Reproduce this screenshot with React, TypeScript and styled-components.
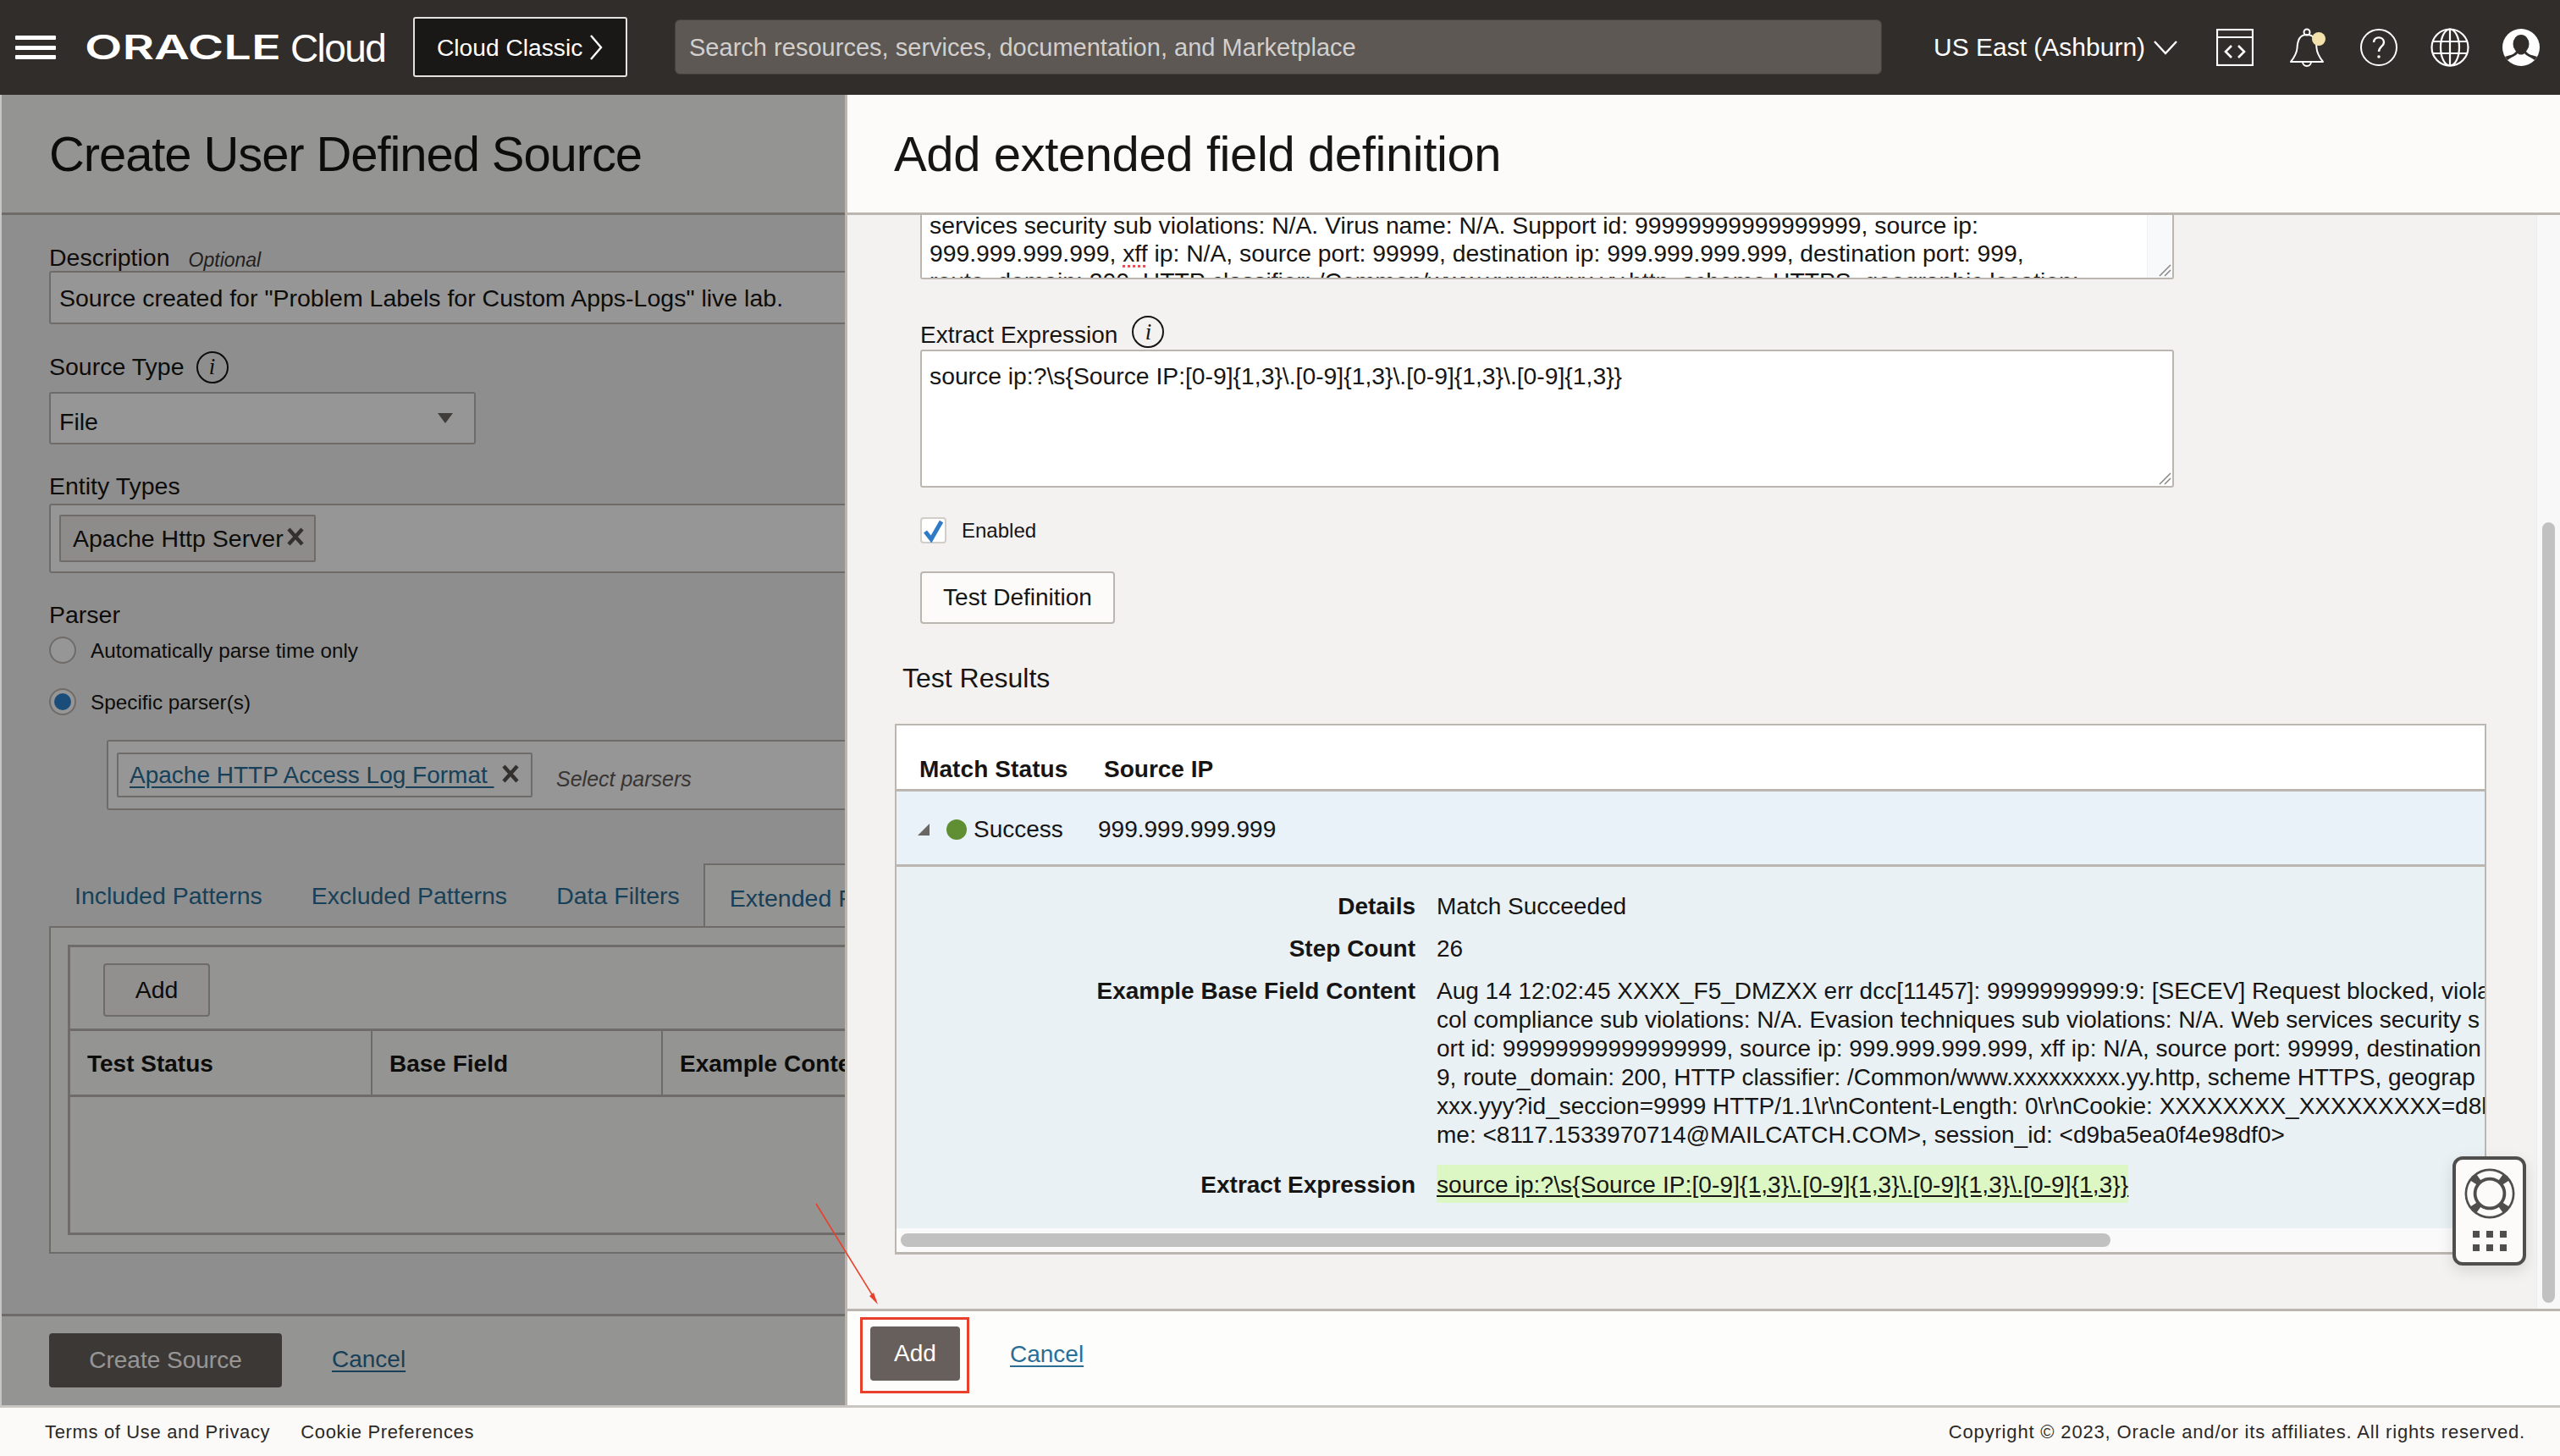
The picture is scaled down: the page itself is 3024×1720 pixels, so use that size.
import React from "react";
import styled, { createGlobalStyle } from "styled-components";

const Global = createGlobalStyle`
  html, body { margin: 0; padding: 0; background: #fff; }
  * { box-sizing: border-box; }
  body { font-family: "Liberation Sans", Arial, sans-serif; color: #161513; }
`;

const Page = styled.div`
  width: 3024px; height: 1720px; display: flex; flex-direction: column; overflow: hidden;
  font-size: 28px;
`;
const TopBar = styled.header`
  height: 112px; flex: none; background: #312d2a; display: flex; align-items: center; color: #fff; position: relative;
`;
const Burger = styled.div`
  width: 48px; height: 28px; margin-left: 18px; display: flex; flex-direction: column; justify-content: space-between;
  span { display: block; height: 5px; background: #fff; border-radius: 1px; }
`;
const LogoMark = styled.svg`
  margin-left: 34px; flex: none; display: block;
`;
const CloudWord = styled.span`
  margin-left: 11px; font-size: 46px; letter-spacing: -1.6px; width: 130px; color: #fff; font-weight: 400; margin-top: 2px; flex: none;
`;
const ClassicButton = styled.div`
  width: 253px; height: 71px; margin-left: 15px; margin-top: -1px; flex: none; background: #1a1816; border: 2px solid #e4e2df; border-radius: 3px;
  display: flex; align-items: center; padding: 1px 0 0 26px; gap: 8px; font-size: 28.2px;
`;
const SearchBox = styled.div`
  width: 1426px; height: 65px; margin-left: 56px; margin-top: -1px; flex: none; background: #5d5854; border-radius: 6px; padding: 2px 0 0 16px;
  display: flex; align-items: center; color: #d2cfcc; font-size: 29px; letter-spacing: 0.02px;
  border: 1px solid #45413e;
`;
const Region = styled.div`
  margin-left: 61px; display: flex; align-items: center; gap: 10px; font-size: 30px; flex: none; width: 334px;
`;
const IconRow = styled.div`
  display: flex; align-items: center; flex: none;
  svg { display: block; flex: none; }
`;

const Main = styled.main`
  flex: 1; display: flex; position: relative; min-height: 0;
`;
const LeftPanel = styled.section`
  width: 998px; flex: none; position: relative; overflow: hidden; display: flex; flex-direction: column;
  background: #f3f2f1; border-left: 2px solid #c8c5c2; font-size: 28.5px;
`;
const Dim = styled.div`
  position: absolute; inset: 0; background: rgba(0, 0, 0, 0.41);
`;
const PanelHeader = styled.div`
  height: 142px; flex: none; background: #fcfbfa; border-bottom: 3px solid #bcb6b1; display: flex; align-items: center;
`;
const PanelTitle = styled.h1<{ $left: number; $spacing: number }>`
  margin: 0 0 0 ${p => p.$left}px; font-size: 58px; font-weight: 400; white-space: nowrap; letter-spacing: ${p => p.$spacing}px;
`;
const LeftBody = styled.div`
  flex: 1; min-height: 0; padding-left: 56px; overflow: hidden; display: flex; flex-direction: column;
`;
const FieldLabel = styled.div<{ $top: number; $bottom: number }>`
  height: 32px; margin-top: ${p => p.$top}px; margin-bottom: ${p => p.$bottom}px; padding-top: 1px; display: flex; align-items: center; flex: none; white-space: nowrap;
`;
const OptionalTag = styled.em`
  font-size: 23px; margin-left: 22px; margin-top: 5px; color: #3a3836;
`;
const InfoBadge = styled.span`
  width: 38px; height: 38px; border: 2px solid #161513; border-radius: 50%; display: inline-flex; align-items: center; justify-content: center;
  font-family: "Liberation Serif", serif; font-style: italic; font-size: 27px; margin-left: 14px; flex: none;
`;
const InputBox = styled.div<{ $w: number; $h: number; $left?: number; $top?: number }>`
  width: ${p => p.$w}px; height: ${p => p.$h}px; margin-left: ${p => p.$left ?? 0}px; margin-top: ${p => p.$top ?? 0}px; flex: none; background: #fff; border: 2px solid #bcb6b1; border-radius: 3px;
  display: flex; align-items: center; padding: 0 10px; position: relative; white-space: nowrap;
`;
const InputText = styled.span<{ $top: number }>`
  margin-top: ${p => p.$top}px;
`;
const SelectCaret = styled.svg`
  position: absolute; right: 24px; top: 22px;
`;
const Chip = styled.div<{ $w: number; $h: number }>`
  width: ${p => p.$w}px; height: ${p => p.$h}px; background: #f1efed; border: 2px solid #bcb6b1; border-radius: 2px; display: flex; align-items: center; padding-left: 14px; gap: 3px; flex: none;
`;
const ChipOutline = styled(Chip)`
  background: #fff; gap: 8px; padding-left: 13px; font-size: 28px;
`;
const ChipLink = styled.a`
  color: #2a6e96; text-decoration: underline; white-space: pre; text-underline-offset: 4px;
`;
const CrossSvg = styled.svg`
  flex: none; margin-top: -4px;
`;
const RadioRow = styled.div<{ $top: number }>`
  height: 34px; margin-top: ${p => p.$top}px; display: flex; align-items: center; font-size: 24.3px; gap: 17px; flex: none; padding-top: 2px;
`;
const Radio = styled.span<{ $on?: boolean }>`
  width: 32px; height: 32px; margin-top: -2px; border-radius: 50%; border: 2px solid #bcb6b1; background: #fff; display: flex; align-items: center; justify-content: center; flex: none;
  &::after { content: ""; width: 20px; height: 20px; border-radius: 50%; background: ${p => (p.$on ? "#2f84d0" : "transparent")}; }
`;
const Placeholder = styled.em`
  font-size: 25px; color: #5f5b57; margin-left: 28px; margin-top: 10px;
`;
const Tabs = styled.div`
  height: 74px; margin-top: 63px; display: flex; flex: none; padding-left: 30px; align-items: stretch;
`;
const TabLink = styled.span<{ $gap: number }>`
  color: #2a6e96; margin-right: ${p => p.$gap}px; display: flex; align-items: center; padding-top: 3px; white-space: nowrap;
`;
const TabActive = styled.span`
  color: #2a6e96; border: 2px solid #bcb6b1; border-bottom: none; background: #fcfbfa; width: 300px; padding: 6px 0 0 29px; display: flex; align-items: center; white-space: nowrap;
`;
const TabPanel = styled.div`
  width: 1100px; height: 387px; flex: none; border: 2px solid #bcb6b1; padding: 20px 0 20px 20px; background: #fcfbfa;
`;
const TabInner = styled.div`
  height: 100%; width: 1100px; border: 3px solid #bcb6b1; border-right: none; background: #fcfbfa;
`;
const InnerToolbar = styled.div`
  height: 99px; padding: 19px 0 0 39px; border-bottom: 3px solid #bcb6b1;
`;
const GhostButton = styled.div<{ $w: number }>`
  width: ${p => p.$w}px; height: 63px; border: 2px solid #bcb6b1; border-radius: 4px; display: flex; align-items: center; justify-content: center; white-space: nowrap; background: #f6f5f4;
`;
const HeadRow = styled.div`
  height: 78px; display: flex; border-bottom: 3px solid #bcb6b1; font-weight: 700; font-size: 28px;
`;
const HeadCell = styled.div<{ $w: number }>`
  width: ${p => p.$w}px; flex: none; padding: 2px 0 0 20px; display: flex; align-items: center; border-right: 2px solid #bcb6b1; white-space: nowrap;
`;
const LeftFooter = styled.div`
  height: 108px; flex: none; border-top: 3px solid #bcb6b1; background: #fcfbfa; padding: 20px 0 0 56px; display: flex; gap: 59px; font-size: 28px;
`;
const PrimaryButton = styled.div<{ $w: number }>`
  width: ${p => p.$w}px; height: 64px; background: #665f5b; color: #fff; border-radius: 4px; display: flex; align-items: center; justify-content: center; flex: none; white-space: nowrap;
`;
const FooterLink = styled.a<{ $top: number }>`
  color: #2a6e96; text-decoration: underline; margin-top: ${p => p.$top}px; height: 36px; text-underline-offset: 4px;
`;

const RightPanel = styled.section`
  flex: 1; min-width: 0; display: flex; flex-direction: column; border-left: 3px solid #bcb6b1; background: #fcfbfa; position: relative;
`;
const RightScroll = styled.div`
  flex: 1; min-height: 0; display: flex; background: #f3f2f1;
`;
const RightContent = styled.div`
  flex: 1; min-width: 0; padding-left: 86px; overflow: hidden; display: flex; flex-direction: column;
`;
const ScrollTrack = styled.div`
  width: 28px; flex: none; background: #f8f8f8; border-left: 1px solid #ebebeb; padding: 363px 6px 7px 6px;
`;
const ScrollThumb = styled.div`
  height: 100%; background: #c1c1c1; border-radius: 8px;
`;
const ClippedArea = styled.div`
  width: 1481px; height: 76px; flex: none; background: #fff; border: 2px solid #bcb6b1; border-top: none; border-radius: 0 0 3px 3px; overflow: hidden; position: relative; padding-left: 9px; line-height: 33px; font-size: 28.3px; white-space: nowrap;
  &::after { content: ""; position: absolute; right: 0; top: 0; bottom: 0; width: 29px; background: #f8f9fa; border-left: 1px solid #efefef; }
`;
const ClippedText = styled.div`
  margin-top: -4px;
`;
const Misspelt = styled.span`
  text-decoration: underline dotted #e0555a; text-underline-offset: 4px;
`;
const Grip = styled.svg`
  position: absolute; right: 1px; bottom: 1px; z-index: 1;
`;
const ExprLabel = styled.div`
  margin-top: 46px; height: 37px; display: flex; align-items: flex-end; flex: none;
`;
const ExprBadge = styled(InfoBadge)`
  margin: 0 0 1px 17px; position: relative; top: -1px;
`;
const ExprText = styled.span`
  line-height: 34px; position: relative; top: 1px; padding-bottom: 1px;
`;
const ExprArea = styled.div`
  width: 1481px; height: 163px; flex: none; background: #fff; border: 2px solid #bcb6b1; border-radius: 3px; position: relative; padding: 13px 9px; line-height: 33px; font-size: 28.3px;
`;
const CheckRow = styled.div`
  margin-top: 35px; height: 31px; display: flex; align-items: center; gap: 18px; font-size: 24px; flex: none;
`;
const CheckBox = styled.span`
  width: 31px; height: 31px; border: 2px solid #d1cdc9; border-radius: 4px; background: #fff; display: flex; align-items: center; justify-content: center;
`;
const TestButton = styled(GhostButton)`
  margin-top: 33px; height: 62px; flex: none; background: #fcfbfa;
`;
const ResultsHeading = styled.h2`
  margin: 44px 0 0 -21px; height: 40px; font-size: 32px; font-weight: 400; line-height: 40px; flex: none;
`;
const ResultsBox = styled.div`
  margin: 34px 0 0 -30px; width: 1880px; height: 627px; flex: none; border: 2px solid #bcb6b1; border-bottom-width: 3px; background: #fff; overflow: hidden; display: flex; flex-direction: column;
`;
const ResultsHead = styled.div`
  height: 78px; flex: none; border-bottom: 3px solid #bcb6b1; font-weight: 700; display: flex; align-items: flex-end; padding: 0 0 7px 27px;
  span:first-child { width: 218px; letter-spacing: 0.1px; }
`;
const ResultRow = styled.div`
  height: 89px; flex: none; background: #e9f1f9; border-bottom: 3px solid #bcb6b1; display: flex; align-items: center; padding: 3px 0 0 24px;
`;
const Caret = styled.svg`
  flex: none; margin-right: 19px;
`;
const Dot = styled.span`
  width: 24px; height: 24px; border-radius: 50%; background: #5f8f32; margin-right: 8px; flex: none;
`;
const StatusText = styled.span`
  width: 147px; flex: none;
`;
const DetailBody = styled.div`
  flex: 1; min-height: 0; background: #e9f1f5; padding-top: 30px; display: grid; grid-template-columns: 613px 1fr; column-gap: 25px; grid-auto-rows: min-content; row-gap: 16px; line-height: 34px; overflow: hidden; white-space: pre;
`;
const DetailKey = styled.div<{ $top?: number }>`
  font-weight: 700; text-align: right; margin-top: ${p => p.$top ?? 0}px;
`;
const DetailValue = styled.div`
  min-width: 0; overflow: hidden;
`;
const DetailHighlight = styled.div`
  display: inline-block; height: 45px; line-height: 45px; background: #dcf7c4; text-decoration: underline; text-underline-offset: 3px; margin-top: 2px; letter-spacing: 0.11px; padding-top: 1px;
`;
const HScroll = styled.div`
  height: 28px; flex: none; background: #fafafa; padding: 6px 0 0 5px;
`;
const HThumb = styled.div`
  width: 1429px; height: 16px; border-radius: 8px; background: #c1c1c1;
`;
const RightFooter = styled.div`
  height: 114px; flex: none; border-top: 3px solid #bcb6b1; background: #fdfdfc; padding: 18px 0 0 27px; display: flex; gap: 59px;
`;
const Widget = styled.div`
  position: absolute; right: 40px; top: 1254px; width: 87px; height: 129px; background: #fcfbfa; border: 4px solid #504e4c; border-radius: 12px; box-shadow: 0 6px 18px rgba(0,0,0,.12);
  display: flex; flex-direction: column; align-items: center; padding-top: 10px;
`;
const GridDots = styled.svg`
  margin-top: 14px;
`;
const Highlight = styled.div`
  position: absolute; left: 1016px; top: 1444px; width: 129px; height: 90px; border: 3px solid #e8402a;
`;
const ArrowMark = styled.svg`
  position: absolute; left: 955px; top: 1300px; pointer-events: none;
`;
const BottomBar = styled.footer`
  height: 60px; flex: none; background: #fbfaf8; border-top: 3px solid #c9c5c1; display: flex; align-items: center; padding: 1px 41px 0 53px; font-size: 22px; letter-spacing: 0.65px; color: #2b2927;
`;
const BottomLink = styled.span`
  margin-right: 36px;
`;
const Copyright = styled.span`
  letter-spacing: 0.83px; margin-left: auto;
`;

const CrossIcon = () => (
  <CrossSvg width="22" height="22" viewBox="0 0 22 22">
    <path d="M3 2 L19 20 M19 2 L3 20" stroke="#57534f" strokeWidth="4.4" />
  </CrossSvg>
);

const Chevron = ({ w, h, d }: { w: number; h: number; d: string }) => (
  <svg width={w} height={h} viewBox={`0 0 ${w} ${h}`} style={{ flex: "none" }}>
    <path d={d} fill="none" stroke="#fff" strokeWidth="2.4" />
  </svg>
);

const DETAIL_LINES = [
  "Aug 14 12:02:45 XXXX_F5_DMZXX err dcc[11457]: 9999999999:9: [SECEV] Request blocked, violat",
  "col compliance sub violations: N/A. Evasion techniques sub violations: N/A. Web services security s",
  "ort id: 99999999999999999, source ip: 999.999.999.999, xff ip: N/A, source port: 99999, destination",
  "9, route_domain: 200, HTTP classifier: /Common/www.xxxxxxxxx.yy.http, scheme HTTPS, geograp",
  "xxx.yyy?id_seccion=9999 HTTP/1.1\\r\\nContent-Length: 0\\r\\nCookie: XXXXXXXX_XXXXXXXXX=d8b",
  "me: <8117.1533970714@MAILCATCH.COM>, session_id: <d9ba5ea0f4e98df0>",
];

export default function App() {
  return (
    <Page>
      <Global />
      <TopBar>
        <Burger><span /><span /><span /></Burger>
        <LogoMark width="232" height="36" viewBox="0 0 232 36">
          <text x="0" y="32" textLength="232" lengthAdjust="spacingAndGlyphs" fontFamily="Inter, sans-serif" fontWeight="600" fontSize="39" fill="#fff">ORACLE</text>
        </LogoMark>
        <CloudWord>Cloud</CloudWord>
        <ClassicButton>
          Cloud Classic
          <Chevron w={16} h={32} d="M2 2 L14 16 L2 30" />
        </ClassicButton>
        <SearchBox>Search resources, services, documentation, and Marketplace</SearchBox>
        <Region>
          US East (Ashburn)
          <Chevron w={28} h={18} d="M1 2 L14 16 L27 2" />
        </Region>
        <IconRow>
          <svg width="44" height="44" viewBox="0 0 44 44" fill="none" stroke="#fff" strokeWidth="2.2">
            <rect x="1" y="1" width="42" height="42" />
            <path d="M1 10 H43" />
            <path d="M18 20 L11 27 L18 34 M26 20 L33 27 L26 34" strokeWidth="2.6" />
          </svg>
          <svg width="44" height="46" viewBox="0 0 44 46" fill="none" stroke="#fff" strokeWidth="2" style={{ marginLeft: 43 }}>
            <circle cx="20" cy="5" r="3.5" />
            <path d="M20 8 C11 8 9 15 8.500 24 C8 31 4 36 1 40 H39 C36 36 32 31 31.500 24 C31 15 29 8 20 8 Z" strokeLinejoin="round" />
            <path d="M15 40 A5 5 0 0 0 25 40" />
            <circle cx="34" cy="13" r="8" fill="#f3e2ab" stroke="none" />
          </svg>
          <svg width="44" height="44" viewBox="0 0 44 44" fill="none" stroke="#fff" strokeWidth="2" style={{ marginLeft: 39 }}>
            <circle cx="22" cy="22" r="21" />
            <path d="M16 16 C16 8 28 9 28 16 C28 21 22 21 22 27" strokeWidth="2.4" />
            <circle cx="22" cy="33" r="1.800" fill="#fff" stroke="none" />
          </svg>
          <svg width="46" height="46" viewBox="0 0 46 46" fill="none" stroke="#fff" strokeWidth="2.200" style={{ marginLeft: 39 }}>
            <circle cx="23" cy="23" r="21.500" />
            <ellipse cx="23" cy="23" rx="11" ry="21.500" />
            <path d="M23 1.500 V44.500 M3 16 H43 M3 30 H43" />
          </svg>
          <svg width="44" height="44" viewBox="0 0 44 44" style={{ marginLeft: 39 }}>
            <circle cx="22" cy="22" r="22" fill="#fff" />
            <ellipse cx="22" cy="18" rx="9.500" ry="11" fill="#312d2a" />
            <path d="M3 33 C10 31 15 30 17 25 H27 C29 30 34 31 41 33 L38 37 C33 33 28 32 26 29 C24 31 20 31 18 29 C16 32 11 33 6 37 Z" fill="#312d2a" />
          </svg>
        </IconRow>
      </TopBar>

      <Main>
        <LeftPanel>
          <PanelHeader><PanelTitle $left={56} $spacing={-1.1}>Create User Defined Source</PanelTitle></PanelHeader>
          <LeftBody>
            <FieldLabel $top={34} $bottom={0}>Description<OptionalTag>Optional</OptionalTag></FieldLabel>
            <InputBox $w={1100} $h={63}><InputText $top={2}>Source created for "Problem Labels for Custom Apps-Logs" live lab.</InputText></InputBox>
            <FieldLabel $top={34} $bottom={14}>Source Type<InfoBadge>i</InfoBadge></FieldLabel>
            <InputBox $w={504} $h={62}>
              <InputText $top={8}>File</InputText>
              <SelectCaret width="20" height="14" viewBox="0 0 20 14"><path d="M1 1 H19 L10 13 Z" fill="#6b6661" /></SelectCaret>
            </InputBox>
            <FieldLabel $top={33} $bottom={5}>Entity Types</FieldLabel>
            <InputBox $w={1100} $h={82}>
              <Chip $w={303} $h={56}>Apache Http Server<CrossIcon /></Chip>
            </InputBox>
            <FieldLabel $top={33} $bottom={0}>Parser</FieldLabel>
            <RadioRow $top={9}><Radio />Automatically parse time only</RadioRow>
            <RadioRow $top={27}><Radio $on />Specific parser(s)</RadioRow>
            <InputBox $w={1000} $h={83} $left={68} $top={28}>
              <ChipOutline $w={491} $h={53}><ChipLink>Apache HTTP Access Log Format </ChipLink><CrossIcon /></ChipOutline>
              <Placeholder>Select parsers</Placeholder>
            </InputBox>
            <Tabs>
              <TabLink $gap={58}>Included Patterns</TabLink>
              <TabLink $gap={58}>Excluded Patterns</TabLink>
              <TabLink $gap={28}>Data Filters</TabLink>
              <TabActive>Extended Fields</TabActive>
            </Tabs>
            <TabPanel>
              <TabInner>
                <InnerToolbar><GhostButton $w={126}>Add</GhostButton></InnerToolbar>
                <HeadRow>
                  <HeadCell $w={357}>Test Status</HeadCell>
                  <HeadCell $w={343}>Base Field</HeadCell>
                  <HeadCell $w={400}>Example Content</HeadCell>
                </HeadRow>
              </TabInner>
            </TabPanel>
          </LeftBody>
          <LeftFooter>
            <PrimaryButton $w={275}>Create Source</PrimaryButton>
            <FooterLink $top={15}>Cancel</FooterLink>
          </LeftFooter>
          <Dim />
        </LeftPanel>

        <RightPanel>
          <PanelHeader><PanelTitle $left={55} $spacing={-0.4}>Add extended field definition</PanelTitle></PanelHeader>
          <RightScroll>
            <RightContent>
              <ClippedArea>
                <ClippedText>
                  services security sub violations: N/A. Virus name: N/A. Support id: 99999999999999999, source ip:<br />
                  999.999.999.999, <Misspelt>xff</Misspelt> ip: N/A, source port: 99999, destination ip: 999.999.999.999, destination port: 999,<br />
                  route_domain: 200, HTTP classifier: /Common/www.xxxxxxxxx.yy.http, scheme HTTPS, geographic location:
                </ClippedText>
                <Grip width="18" height="18" viewBox="0 0 18 18"><path d="M4 17 L17 4 M10 17 L17 10" stroke="#8a8682" strokeWidth="1.5" /></Grip>
              </ClippedArea>
              <ExprLabel><ExprText>Extract Expression</ExprText><ExprBadge>i</ExprBadge></ExprLabel>
              <ExprArea>
                {"source ip:?\\s{Source IP:[0-9]{1,3}\\.[0-9]{1,3}\\.[0-9]{1,3}\\.[0-9]{1,3}}"}
                <Grip width="18" height="18" viewBox="0 0 18 18"><path d="M4 17 L17 4 M10 17 L17 10" stroke="#8a8682" strokeWidth="1.5" /></Grip>
              </ExprArea>
              <CheckRow>
                <CheckBox>
                  <svg width="26" height="28" viewBox="0 0 26 28"><path d="M3 15 L10 24 L22 3" fill="none" stroke="#2f7bc8" strokeWidth="5" /></svg>
                </CheckBox>
                Enabled
              </CheckRow>
              <TestButton $w={230}>Test Definition</TestButton>
              <ResultsHeading>Test Results</ResultsHeading>
              <ResultsBox>
                <ResultsHead><span>Match Status</span><span>Source IP</span></ResultsHead>
                <ResultRow>
                  <Caret width="16" height="16" viewBox="0 0 16 16"><path d="M15 1 V15 H1 Z" fill="#6b6661" /></Caret>
                  <Dot />
                  <StatusText>Success</StatusText>
                  999.999.999.999
                </ResultRow>
                <DetailBody>
                  <DetailKey>Details</DetailKey><DetailValue>Match Succeeded</DetailValue>
                  <DetailKey>Step Count</DetailKey><DetailValue>26</DetailValue>
                  <DetailKey>Example Base Field Content</DetailKey>
                  <DetailValue>{DETAIL_LINES.join("\n")}</DetailValue>
                  <DetailKey $top={9}>Extract Expression</DetailKey>
                  <DetailValue>
                    <DetailHighlight>{"source ip:?\\s{Source IP:[0-9]{1,3}\\.[0-9]{1,3}\\.[0-9]{1,3}\\.[0-9]{1,3}}"}</DetailHighlight>
                  </DetailValue>
                </DetailBody>
                <HScroll><HThumb /></HScroll>
              </ResultsBox>
            </RightContent>
            <ScrollTrack><ScrollThumb /></ScrollTrack>
          </RightScroll>
          <RightFooter>
            <PrimaryButton $w={106}>Add</PrimaryButton>
            <FooterLink $top={17}>Cancel</FooterLink>
          </RightFooter>
          <Widget>
            <svg width="60" height="60" viewBox="0 0 60 60">
              <circle cx="30" cy="30" r="29.500" fill="#504e4c" />
              <g fill="none" stroke="#fcfbfa" strokeWidth="7.500">
                <path d="M17 11 A23 23 0 0 1 43 11" />
                <path d="M17 49 A23 23 0 0 0 43 49" />
                <path d="M11 17 A23 23 0 0 0 11 43" />
                <path d="M49 17 A23 23 0 0 1 49 43" />
              </g>
              <circle cx="30" cy="30" r="15.500" fill="#fcfbfa" />
            </svg>
            <GridDots width="40" height="24" viewBox="0 0 40 24" fill="#504e4c">
              <rect x="0" y="0" width="8" height="8" /><rect x="16" y="0" width="8" height="8" /><rect x="32" y="0" width="8" height="8" />
              <rect x="0" y="16" width="8" height="8" /><rect x="16" y="16" width="8" height="8" /><rect x="32" y="16" width="8" height="8" />
            </GridDots>
          </Widget>
        </RightPanel>
        <Highlight />
        <ArrowMark width="100" height="140" viewBox="0 0 100 140">
          <path d="M9 10 L78 122" stroke="#e8402a" strokeWidth="1.6" />
          <path d="M82 129 L72 119 L77 115 Z" fill="#e8402a" />
        </ArrowMark>
      </Main>

      <BottomBar>
        <BottomLink>Terms of Use and Privacy</BottomLink>
        <BottomLink>Cookie Preferences</BottomLink>
        <Copyright>Copyright © 2023, Oracle and/or its affiliates. All rights reserved.</Copyright>
      </BottomBar>
    </Page>
  );
}
